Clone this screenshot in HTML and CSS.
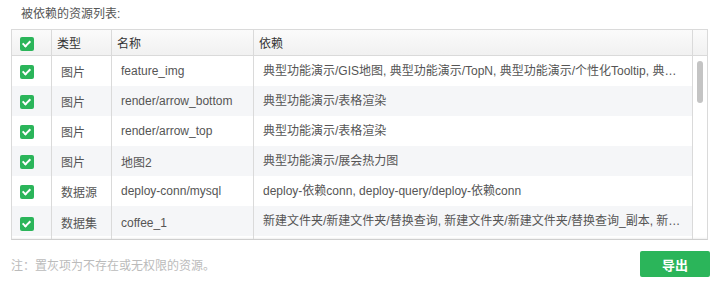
FILE: index.html
```html
<!DOCTYPE html>
<html lang="zh">
<head>
  <meta charset="UTF-8">
  <title>被依赖的资源列表</title>
  <link rel="stylesheet" href="styles.css">
</head>
<body>
  <div class="panel">
    <div class="title">被依赖的资源列表:</div>

    <div class="grid">
      <div class="head">
        <div class="cell c-check"><span class="check"></span></div>
        <div class="cell c-type">类型</div>
        <div class="cell c-name">名称</div>
        <div class="cell c-dep">依赖</div>
        <div class="cell c-scroll"></div>
      </div>

      <div class="body">
        <div class="rows">
          <div class="row">
            <div class="cell c-check"><span class="check"></span></div>
            <div class="cell c-type">图片</div>
            <div class="cell c-name">feature_img</div>
            <div class="cell c-dep">典型功能演示/GIS地图, 典型功能演示/TopN, 典型功能演示/个性化Tooltip, 典型功能演示/表格渲染</div>
          </div>
          <div class="row">
            <div class="cell c-check"><span class="check"></span></div>
            <div class="cell c-type">图片</div>
            <div class="cell c-name">render/arrow_bottom</div>
            <div class="cell c-dep">典型功能演示/表格渲染</div>
          </div>
          <div class="row">
            <div class="cell c-check"><span class="check"></span></div>
            <div class="cell c-type">图片</div>
            <div class="cell c-name">render/arrow_top</div>
            <div class="cell c-dep">典型功能演示/表格渲染</div>
          </div>
          <div class="row">
            <div class="cell c-check"><span class="check"></span></div>
            <div class="cell c-type">图片</div>
            <div class="cell c-name">地图2</div>
            <div class="cell c-dep">典型功能演示/展会热力图</div>
          </div>
          <div class="row">
            <div class="cell c-check"><span class="check"></span></div>
            <div class="cell c-type">数据源</div>
            <div class="cell c-name">deploy-conn/mysql</div>
            <div class="cell c-dep">deploy-依赖conn, deploy-query/deploy-依赖conn</div>
          </div>
          <div class="row">
            <div class="cell c-check"><span class="check"></span></div>
            <div class="cell c-type">数据集</div>
            <div class="cell c-name">coffee_1</div>
            <div class="cell c-dep">新建文件夹/新建文件夹/替换查询, 新建文件夹/新建文件夹/替换查询_副本, 新建文件夹/替换查询</div>
          </div>
        </div>
        <div class="track"><div class="thumb"></div></div>
      </div>
    </div>

    <div class="footer">
      <span class="note">注：置灰项为不存在或无权限的资源。</span>
      <button class="btn">导出</button>
    </div>
  </div>
</body>
</html>
```

FILE: styles.css
```css
body { margin: 0; background: #fff; font-family: "Liberation Sans", Arial, "Noto Sans CJK SC", sans-serif; font-size: 12px; color: #555; }
.panel { width: 697px; padding: 0 12px 0 11px; }
.title { height: 29px; line-height: 29px; padding-left: 10px; color: #555; }

.grid { border: 1px solid #dadada; border-bottom-color: #cfcfcf; }
.head { display: flex; height: 25px; background: linear-gradient(#fbfbfb, #f1f1f1); border-bottom: 1px solid #dadada; color: #333; }
.cell { box-sizing: border-box; border-right: 1px solid #dadada; display: flex; align-items: center; white-space: nowrap; overflow: hidden; }
.head .cell { padding-left: 5px; }
.row .cell { padding-left: 9px; }
.c-check { width: 40px; }
.head .c-check, .row .c-check { padding-left: 8px; padding-top: 2px; }
.c-type { width: 60px; }
.c-name { width: 142px; }
.c-dep { width: 439px; }
.c-scroll { width: 14px; border-right: none; }
.row .c-dep { display: block; line-height: 30px; text-overflow: ellipsis; padding-right: 8px; }

.body { display: flex; height: 183px; overflow: hidden; box-shadow: inset 0 -2px 2px -1px rgba(0, 0, 0, 0.06); }
.rows { width: 681px; }
.rows .row:last-child .cell { height: 33px; }
.row { display: flex; height: 30px; }
.row:nth-child(even) { background: #f5f6f8; }
.track { width: 14px; padding-top: 5px; }
.thumb { width: 6px; height: 42px; margin: 0 auto 0 4px; background: #c4c4c4; border-radius: 3px; }

.check { display: block; width: 14px; height: 14px; border-radius: 2px; background: #2bb55a; position: relative; }
.check::after { content: ""; position: absolute; left: 4px; top: 2px; width: 3px; height: 6px; border: solid #fff; border-width: 0 2px 2px 0; transform: rotate(45deg); }

.footer { display: flex; justify-content: space-between; align-items: center; padding-top: 11px; }
.note { color: #bbb; }
.btn { width: 70px; height: 26px; margin-right: -2px; border: none; border-radius: 2px; background: #2bb55a; color: #fff; font-family: "Noto Sans CJK SC", sans-serif; font-size: 13px; font-weight: bold; cursor: pointer; }
```
